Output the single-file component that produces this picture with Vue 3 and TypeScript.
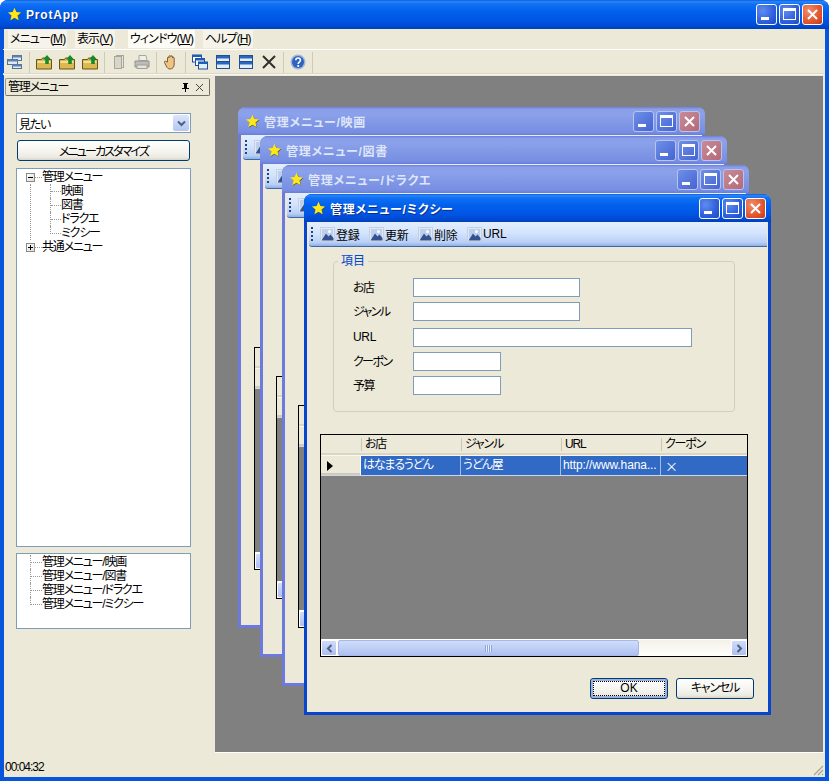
<template>
  <div class="app">
    <header class="titlebar main-title">
      <svg class="star" viewBox="0 0 16 16"><path d="M8.500 1.500l2 4.600 5 .4-3.800 3.300 1.200 4.900-4.400-2.600-4.300 2.600 1.100-4.900L2 6.500l5-.4z" fill="#55502a" /><path d="M8 .8l2 4.600 5 .4-3.800 3.300 1.200 4.900L8 11.400l-4.400 2.600 1.200-4.900L1 5.800l5-.4z" fill="#ffe818" /></svg>
      <span class="title-text app-name">ProtApp</span>
      <div class="win-buttons">
        <button class="wb"><i class="min-glyph"></i></button>
        <button class="wb"><i class="max-glyph"></i></button>
        <button class="wb close"><svg viewBox="0 0 13 13"><path d="M2 2l9 9M11 2l-9 9" stroke="#fff" stroke-width="2" /></svg></button>
      </div>
    </header>

    <div class="client">
      <nav class="menubar">
        <span v-for="m in menus" :key="m.key" class="menu-item" :style="{ width: m.width + 'px' }">
          <span class="menu-label" :class="{ bright: m.key === 'W' }">{{ m.label }}(<u>{{ m.key }}</u>)</span>
        </span>
      </nav>

      <div class="toolbar">
        <template v-for="(t, i) in tools" :key="i">
          <span v-if="t === 'sep'" class="sep"></span>
          <span v-else class="tool">
            <svg v-if="t === 'windows'" viewBox="0 0 16 16"><rect x="5.500" y="1.500" width="9" height="5" fill="#dfe8f6" stroke="#5a7288" /><rect x="5.500" y="1.500" width="9" height="2" fill="#5a82b8" /><rect x=".5" y="5.500" width="10" height="5" fill="#dfe8f6" stroke="#5a7288" /><rect x=".5" y="5.500" width="10" height="2" fill="#5a82b8" /><rect x="5.500" y="10.500" width="9" height="4" fill="#dfe8f6" stroke="#5a7288" /><rect x="5.500" y="10.500" width="9" height="2" fill="#5a82b8" /></svg>
            <svg v-else-if="t === 'folder'" viewBox="0 0 16 16"><path d="M.5 5.500h5l1-1.500h3v1.500h6v9.500H.5z" fill="#dcb850" stroke="#6a5418" /><path d="M1.500 7h13v2h-13z" fill="#f4e090" /><path d="M11 1l4 4.500h-2.200V10H9.200V5.500H7z" fill="#168a2c" /></svg>
            <svg v-else-if="t === 'doc'" viewBox="0 0 16 16"><rect x="5.500" y="1.500" width="7" height="12" fill="#e6e4d8" stroke="#a8a698" /><rect x="3.500" y="2.500" width="7" height="12" fill="#d8d6ca" stroke="#a8a698" /></svg>
            <svg v-else-if="t === 'print'" viewBox="0 0 16 16"><path d="M5 1.500h7l1 5H5z" fill="#eeeeea" stroke="#a8a8a0" /><path d="M1 7h14v6H1z" fill="#bdbdb6" stroke="#92928a" /><rect x="3" y="11" width="10" height="3.500" fill="#e4e4de" stroke="#a0a098" /></svg>
            <svg v-else-if="t === 'hand'" viewBox="0 0 16 16"><path d="M4.500 8V4c0-1.200 1.500-1.200 1.500 0V2.500c0-1.200 1.800-1.200 1.800 0V2.700c0-1.200 1.800-1.200 1.800 0V4c0-1 1.600-1 1.600 0v6c0 3-1.500 5-4 5-2 0-3-1-4-3L1.500 8.500C1 7.500 2.300 6.600 3 7.500z" fill="#ecc488" stroke="#7a5420" stroke-width=".9" /></svg>
            <svg v-else-if="t === 'cascade'" viewBox="0 0 16 16"><rect x=".5" y="1" width="9" height="7" fill="#fff" stroke="#1f4f96" /><rect x=".5" y="1" width="9" height="2" fill="#1f5fb8" /><rect x="3.500" y="4.500" width="9" height="7" fill="#fff" stroke="#1f4f96" /><rect x="3.500" y="4.500" width="9" height="2" fill="#1f5fb8" /><rect x="6.500" y="8" width="9" height="7" fill="#e4eefa" stroke="#1f4f96" /><rect x="6.500" y="8" width="9" height="2" fill="#1f5fb8" /></svg>
            <svg v-else-if="t === 'tile'" viewBox="0 0 16 16"><rect x="1.500" y="1.500" width="13" height="13" fill="#e4eefa" stroke="#1f4f96" /><rect x="2" y="2" width="12" height="2.500" fill="#2a68c0" /><rect x="2" y="8" width="12" height="2.500" fill="#2a68c0" /><path d="M2 7.500h12" stroke="#1f4f96" /></svg>
            <svg v-else-if="t === 'cross'" viewBox="0 0 16 16"><path d="M2 2l12 12M14 2L2 14" stroke="#303030" stroke-width="2" /></svg>
            <svg v-else viewBox="0 0 16 16"><circle cx="8" cy="8" r="7.500" fill="#9db4dc" /><circle cx="8" cy="8" r="6" fill="#2f62c0" /><path d="M5.800 6.200c0-3 4.600-3 4.600 0 0 2-2.200 1.900-2.200 3.700" fill="none" stroke="#fff" stroke-width="1.600" /><rect x="7.300" y="11" width="1.800" height="1.800" fill="#fff" /></svg>
          </span>
        </template>
      </div>

      <div class="workspace">
        <aside class="side">
          <div class="side-head">
            <span class="side-title">管理メニュー</span>
            <svg class="pin" viewBox="0 0 9 9"><path d="M2 0h5v1H6v4h2v1H5v3H4V6H1V5h2V1H2z" fill="#000" /></svg>
            <svg class="side-close" viewBox="0 0 9 9"><path d="M1 1l7 7M8 1L1 8" stroke="#444" stroke-width="1" /></svg>
          </div>
          <div class="select">
            <span class="select-value">見たい</span>
            <span class="select-arrow"><svg viewBox="0 0 9 7"><path d="M1 1.500l3.500 3.500L8 1.500" fill="none" stroke="#4d6185" stroke-width="2" /></svg></span>
          </div>
          <button class="xp-btn custom-btn">メニューカスタマイズ</button>
          <div class="tree big-tree">
            <div class="root-row"><span class="expander"><i class="h"></i></span><span class="dash"></span><span>管理メニュー</span></div>
            <div class="root-children">
              <div class="branch">
                <div v-for="c in treeChildren" :key="c" class="leaf"><span class="stem short"></span><span>{{ c }}</span></div>
              </div>
            </div>
            <div class="root-row"><span class="expander"><i class="h"></i><i class="v"></i></span><span class="dash"></span><span>共通メニュー</span></div>
          </div>
          <div class="tree open-tree">
            <div class="branch">
              <div v-for="w in windows" :key="w.title" class="leaf"><span class="stem long"></span><span>{{ w.title }}</span></div>
            </div>
          </div>
        </aside>

        <main class="mdi">
          <section
            v-for="(w, i) in windows"
            :key="w.title"
            class="child"
            :class="{ inactive: i !== frontIndex }"
            :style="{ left: 23 + i * 22 + 'px', top: 31 + i * 29 + 'px' }"
          >
            <header class="titlebar child-title">
              <svg class="star" viewBox="0 0 16 16"><path d="M8.500 1.500l2 4.600 5 .4-3.800 3.300 1.200 4.900-4.400-2.600-4.300 2.600 1.100-4.900L2 6.500l5-.4z" fill="#55502a" /><path d="M8 .8l2 4.600 5 .4-3.800 3.300 1.200 4.900L8 11.400l-4.400 2.600 1.200-4.900L1 5.800l5-.4z" fill="#ffe818" /></svg>
              <span class="title-text">{{ w.title }}</span>
              <div class="win-buttons">
                <button class="wb"><i class="min-glyph"></i></button>
                <button class="wb"><i class="max-glyph"></i></button>
                <button class="wb close"><svg viewBox="0 0 13 13"><path d="M2 2l9 9M11 2l-9 9" stroke="#fff" stroke-width="2" /></svg></button>
              </div>
            </header>

            <div class="child-tools">
              <span class="grip"></span>
              <span v-for="a in actions" :key="a" class="action">
                <svg viewBox="0 0 15 15"><rect x=".5" y=".5" width="14" height="14" fill="#fff" stroke="#c4cee4" /><rect x="1.500" y="1.500" width="12" height="12" fill="#bcd0ee" /><path d="M1.500 13.500L6 6.500l2.500 3 2-2 3 3.500v2.500z" fill="#34528e" /><circle cx="9.500" cy="4.500" r="1.500" fill="#fff" /></svg>
                <span v-if="i === frontIndex">{{ a }}</span>
              </span>
            </div>

            <fieldset class="group">
              <template v-if="i === frontIndex">
                <legend>項目</legend>
                <div v-for="f in fields" :key="f.label" class="field" :class="{ 'field-url': f.label === 'URL' }">
                  <label>{{ f.label }}</label>
                  <input type="text" :class="f.size" />
                </div>
              </template>
            </fieldset>

            <div class="grid">
              <div class="grid-row grid-head">
                <span class="cell corner"></span>
                <template v-if="i === frontIndex">
                  <span v-for="h in columns" :key="h" class="cell">{{ h }}</span>
                </template>
              </div>
              <div class="grid-row grid-selected">
                <span class="cell row-head"><i class="arrow"></i></span>
                <template v-if="i === frontIndex">
                  <span class="cell">はなまるうどん</span>
                  <span class="cell">うどん屋</span>
                  <span class="cell url-cell">http://www.hana...</span>
                  <span class="cell mark">×</span>
                </template>
              </div>
              <div class="grid-empty"></div>
              <div class="hscroll">
                <span class="sb-btn"><svg viewBox="0 0 9 9"><path d="M6.500 1L3 4.500 6.500 8" fill="none" stroke="#4d6185" stroke-width="2" /></svg></span>
                <span class="sb-thumb"><i></i></span>
                <span class="sb-track"></span>
                <span class="sb-btn"><svg viewBox="0 0 9 9"><path d="M2.500 1L6 4.500 2.500 8" fill="none" stroke="#4d6185" stroke-width="2" /></svg></span>
              </div>
            </div>

            <footer v-if="i === frontIndex" class="child-foot">
              <button class="xp-btn foot-btn default"><span>OK</span></button>
              <button class="xp-btn foot-btn"><span>キャンセル</span></button>
            </footer>
          </section>
        </main>
      </div>

      <footer class="status">
        <span>00:04:32</span>
        <svg class="size-grip" viewBox="0 0 12 12"><path d="M11 2L2 11M11 6l-5 5M11 10l-1 1" stroke="#a8a594" stroke-width="1.200" /></svg>
      </footer>
    </div>
  </div>
</template>

<script setup lang="ts">
interface Field {
  label: string
  size: 'mid' | 'wide' | 'small'
}

const menus = [
  { label: 'メニュー', key: 'M', width: 67 },
  { label: '表示', key: 'V', width: 53 },
  { label: 'ウィンドウ', key: 'W', width: 75 },
  { label: 'ヘルプ', key: 'H', width: 50 }
]

const tools = [
  'windows', 'sep', 'folder', 'folder', 'folder', 'sep', 'doc', 'print', 'sep', 'hand', 'sep',
  'cascade', 'tile', 'tile', 'cross', 'sep', 'help', 'sep'
]

const treeChildren = ['映画', '図書', 'ドラクエ', 'ミクシー']

const windows = [
  { title: '管理メニュー/映画' },
  { title: '管理メニュー/図書' },
  { title: '管理メニュー/ドラクエ' },
  { title: '管理メニュー/ミクシー' }
]

const frontIndex = windows.length - 1

const actions = ['登録', '更新', '削除', 'URL']

const fields: Field[] = [
  { label: 'お店', size: 'mid' },
  { label: 'ジャンル', size: 'mid' },
  { label: 'URL', size: 'wide' },
  { label: 'クーポン', size: 'small' },
  { label: '予算', size: 'small' }
]

const columns = ['お店', 'ジャンル', 'URL', 'クーポン']
</script>

<style>
html,
body {
  margin: 0;
  overflow: hidden;
  background: #fff;
}
</style>

<style scoped>
.app {
  width: 829px;
  height: 781px;
  display: flex;
  flex-direction: column;
  box-sizing: border-box;
  font-family: "Liberation Sans", "Noto Sans CJK JP", sans-serif;
  font-size: 12px;
  letter-spacing: -1.2px;
  font-feature-settings: "palt";
  color: #000;
  border-radius: 8px 8px 0 0;
  overflow: hidden;
  background: #0855dd;
}

.titlebar {
  display: flex;
  align-items: center;
  flex: none;
  color: #fff;
  background: linear-gradient(#0a5ce4 0, #2b86f5 6%, #0f70f4 14%, #0261ec 40%, #0055e5 70%, #0049d2 90%, #003fb8 100%);
}

.main-title {
  height: 29px;
  padding: 0 6px 0 7px;
}

.star {
  width: 15px;
  height: 15px;
  flex: none;
}

.title-text {
  margin-left: 5px;
  font-weight: 700;
  font-size: 12px;
  text-shadow: 1px 1px 0 #0a2f8a;
  white-space: nowrap;
}

.app-name {
  margin-left: 4px;
  font-size: 12px;
  letter-spacing: 0.8px;
}

.win-buttons {
  margin-left: auto;
  display: flex;
  gap: 2px;
}

.wb {
  width: 21px;
  height: 21px;
  padding: 0;
  box-sizing: border-box;
  border: 1px solid #fff;
  border-radius: 3px;
  background: radial-gradient(circle at 30% 30%, #5f8df0, #2f5fdc 60%, #2148c0);
  display: flex;
  position: relative;
}

.wb.close {
  background: radial-gradient(circle at 30% 30%, #ef8d6c, #e2562e 60%, #c03a14);
  align-items: center;
  justify-content: center;
}

.wb.close svg {
  width: 13px;
  height: 13px;
}

.min-glyph {
  width: 8px;
  height: 3px;
  background: #fff;
  margin: 12px 0 0 4px;
}

.max-glyph {
  width: 13px;
  height: 12px;
  box-sizing: border-box;
  border: 1px solid #fff;
  border-top-width: 3px;
  margin: 3px 0 0 3px;
}

.client {
  flex: 1;
  margin: 0 4px 4px;
  display: flex;
  flex-direction: column;
  background: #ece9d8;
  min-height: 0;
}

.menubar {
  height: 20px;
  flex: none;
  display: flex;
  align-items: center;
  padding-left: 4px;
}

.menu-item {
  flex: none;
  height: 18px;
  line-height: 18px;
  white-space: nowrap;
  letter-spacing: -0.9px;
}

.menu-label {
  display: inline-block;
  padding: 0 2px;
  background: #f6f4ea;
}

.menu-label.bright {
  background: #fcfbf6;
}

.toolbar {
  height: 24px;
  flex: none;
  display: flex;
  align-items: center;
  margin-left: -1px;
  border-top: 1px solid #fff;
  border-bottom: 1px solid #f8f7f0;
  box-shadow: inset 0 -1px 0 #dcd8c4;
}

.tool {
  width: 23px;
  height: 16px;
  display: flex;
  justify-content: center;
}

.tool svg {
  width: 16px;
  height: 16px;
}

.sep {
  width: 6px;
  height: 21px;
  box-sizing: border-box;
  border-left: 3px solid transparent;
  background: linear-gradient(#cdcab6, #cdcab6) no-repeat left / 1px 100%;
}

.workspace {
  flex: 1;
  display: flex;
  min-height: 0;
  padding-top: 1px;
}

.side {
  width: 211px;
  flex: none;
  display: flex;
  flex-direction: column;
  padding-left: 12px;
  box-sizing: border-box;
}

.side-head {
  margin: 2px 5px 0 -11px;
  height: 18px;
  box-sizing: border-box;
  border: 1px solid #9a978a;
  border-right-color: #716f64;
  border-bottom-color: #716f64;
  border-radius: 2px;
  display: flex;
  align-items: center;
  padding: 0 5px 3px 2px;
}

.side-title {
  flex: 1;
}

.pin,
.side-close {
  width: 9px;
  height: 9px;
  margin: 3px 0 0 5px;
}

.select {
  margin-top: 17px;
  width: 175px;
  height: 20px;
  box-sizing: border-box;
  border: 1px solid #7f9db9;
  background: #fff;
  display: flex;
  align-items: center;
  padding: 1px 1px 1px 2px;
}

.select-value {
  flex: 1;
}

.select-arrow {
  width: 16px;
  height: 16px;
  border-radius: 2px;
  background: linear-gradient(#dbe5fb, #b4c6f2);
  display: flex;
  align-items: center;
  justify-content: center;
}

.select-arrow svg {
  width: 9px;
  height: 7px;
}

.xp-btn {
  font: inherit;
  letter-spacing: inherit;
  font-feature-settings: inherit;
  color: #000;
  padding: 0;
  box-sizing: border-box;
  border: 1px solid #003c74;
  border-radius: 3px;
  background: linear-gradient(#fff, #f6f5ef 50%, #ecebe3 85%, #d8d4c8);
}

.custom-btn {
  margin: 7px 0 0 1px;
  width: 173px;
  height: 21px;
  letter-spacing: -1.9px;
}

.tree {
  box-sizing: border-box;
  width: 175px;
  border: 1px solid #7f9db9;
  background: #fff;
  padding-top: 1px;
  line-height: 14px;
}

.big-tree {
  margin-top: 7px;
  height: 379px;
}

.open-tree {
  margin-top: 6px;
  height: 76px;
}

.root-row {
  height: 14px;
  display: flex;
  align-items: center;
  padding-left: 9px;
  white-space: nowrap;
}

.expander {
  width: 9px;
  height: 9px;
  box-sizing: border-box;
  border: 1px solid #8a8a8a;
  background: linear-gradient(135deg, #fff, #dcdcd0);
  position: relative;
  flex: none;
}

.expander .h {
  position: absolute;
  left: 1px;
  top: 3px;
  width: 5px;
  height: 1px;
  background: #000;
}

.expander .v {
  position: absolute;
  left: 3px;
  top: 1px;
  width: 1px;
  height: 5px;
  background: #000;
}

.dash {
  width: 7px;
  border-top: 1px dotted #999;
  flex: none;
}

.root-children {
  margin-left: 13px;
  padding-left: 19px;
  border-left: 1px dotted #999;
}

.open-tree .branch {
  margin-left: 13px;
}

.leaf {
  height: 14px;
  display: flex;
  white-space: nowrap;
}

.leaf:not(:last-child) {
  border-left: 1px dotted #999;
}

.leaf:last-child .stem {
  border-left: 1px dotted #999;
}

.stem {
  height: 7px;
  box-sizing: content-box;
  border-bottom: 1px dotted #999;
  flex: none;
}

.stem.short {
  width: 10px;
}

.stem.long {
  width: 11px;
}

.mdi {
  flex: 1;
  position: relative;
  overflow: hidden;
  background: #808080;
  border-right: 2px solid #ece9d8;
  border-bottom: 1px solid #fff;
  min-width: 0;
}

.child {
  position: absolute;
  width: 467px;
  height: 521px;
  box-sizing: border-box;
  padding: 0 3px 3px;
  display: flex;
  flex-direction: column;
  background: #ece9d8;
  border-radius: 8px 8px 0 0;
  box-shadow: inset 0 0 0 3px #0645cc;
}

.child-title {
  height: 28px;
  margin: 0 -3px;
  padding: 0 5px 0 7px;
  border-radius: 8px 8px 0 0;
}

.child-title .title-text {
  margin-left: 4px;
  font-size: 12px;
  letter-spacing: 0.7px;
}

.inactive {
  box-shadow: inset 0 0 0 3px #6c7ade;
}

.inactive .child-title {
  background: linear-gradient(#6d80da 0, #8a9eea 8%, #8ba1ea 25%, #8097e6 60%, #788ee2 90%, #6a7cd6 100%);
}

.inactive .title-text {
  color: #dfe6fa;
  text-shadow: none;
}

.inactive .wb {
  border-color: #b8c4ef;
  background: linear-gradient(135deg, #6f8fe6, #4464d4);
}

.inactive .wb.close {
  background: linear-gradient(135deg, #c98a98, #b46a78);
}

.inactive .row-head .arrow {
  display: none;
}

.child-tools {
  height: 25px;
  flex: none;
  box-sizing: border-box;
  margin: 0 1px 0 2px;
  display: flex;
  align-items: center;
  padding-left: 2px;
  border-radius: 0 0 0 3px;
  border-bottom: 1px solid #3e67a8;
  background: linear-gradient(#e3effe, #d4e4fc 45%, #b8d0f6 85%, #8fb0e4);
}

.grip {
  width: 2px;
  height: 15px;
  margin-right: 7px;
  background: repeating-linear-gradient(#27417a 0 2px, transparent 2px 4px);
}

.action {
  display: flex;
  align-items: center;
  gap: 1px;
  margin-right: 8px;
  width: 41px;
  white-space: nowrap;
  letter-spacing: -0.2px;
}

.action svg {
  width: 15px;
  height: 15px;
  flex: none;
}

.group {
  margin: 7px 0 0 26px;
  width: 402px;
  height: 158px;
  box-sizing: border-box;
  border: 1px solid #d0d0bf;
  border-radius: 4px;
  padding: 10px 0 0 19px;
  flex: none;
}

.group legend {
  margin-left: -15px;
  padding: 0 3px;
  color: #0046d5;
  line-height: 14px;
  letter-spacing: 0;
}

.field {
  display: flex;
  align-items: center;
  height: 19px;
  margin-bottom: 5px;
}

.field-url {
  margin-top: 7px;
}

.field label {
  width: 60px;
  flex: none;
  letter-spacing: -1.6px;
  margin-top: -2px;
}

.field-url label {
  letter-spacing: -0.3px;
}

.field input {
  height: 19px;
  box-sizing: border-box;
  border: 1px solid #7f9db9;
  background: #fff;
  padding: 0;
  margin: 0;
  outline: none;
}

.field input.mid {
  width: 167px;
}

.field input.wide {
  width: 279px;
}

.field input.small {
  width: 88px;
}

.grid {
  margin: 22px 0 0 13px;
  width: 428px;
  height: 223px;
  flex: none;
  box-sizing: border-box;
  border: 1px solid #000;
  background: #808080;
  display: flex;
  flex-direction: column;
}

.grid-row {
  display: grid;
  grid-template-columns: 40px 100px 100px 100px 86px;
  flex: none;
}

.cell {
  white-space: nowrap;
  padding: 0 2px;
  box-sizing: border-box;
}

.grid-head {
  height: 21px;
  background: #ece9d8;
  border-bottom: 1px solid #f8f8f2;
  box-sizing: border-box;
  line-height: 18px;
  box-shadow: inset 0 -2px 0 #dad6c3;
}

.grid-head .cell {
  padding-left: 4px;
  background: linear-gradient(#cbc7b2, #cbc7b2) no-repeat left 0 top 3px / 1px 13px;
}

.grid-head .corner {
  background: none;
}

.grid-selected {
  height: 20px;
  background: #316ac5;
  color: #fff;
  line-height: 19px;
  border-bottom: 1px solid #c9d6ec;
  box-sizing: border-box;
}

.inactive .grid-selected {
  background: #fff;
}

.grid-selected .cell {
  border-right: 1px solid #a7bce0;
}

.grid-selected .cell:last-child {
  border-right: 0;
}

.url-cell {
  letter-spacing: -0.1px;
}

.mark {
  padding-left: 4px;
  font-family: "Noto Sans CJK JP", sans-serif;
  font-size: 13px;
  letter-spacing: 0;
}

.grid-selected .row-head {
  background: #ece9d8;
  color: #000;
  display: flex;
  align-items: center;
  padding-left: 6px;
  box-shadow: inset 0 -2px 0 #cfcbb8;
  border-right: 1px solid #fff;
}

.arrow {
  width: 0;
  height: 0;
  border-left: 6px solid #000;
  border-top: 5px solid transparent;
  border-bottom: 5px solid transparent;
}

.grid-empty {
  flex: 1;
}

.hscroll {
  height: 17px;
  flex: none;
  box-sizing: border-box;
  border-top: 1px solid #fff;
  display: flex;
  background: #fbfbf8;
}

.sb-btn {
  width: 16px;
  flex: none;
  border-radius: 2px;
  background: linear-gradient(#cfdcf8, #aebff0);
  border: 1px solid #fff;
  box-sizing: border-box;
  display: flex;
  align-items: center;
  justify-content: center;
}

.sb-btn svg {
  width: 9px;
  height: 9px;
}

.sb-thumb {
  width: 301px;
  margin-left: 1px;
  flex: none;
  box-sizing: border-box;
  border: 1px solid #a8b8e8;
  border-radius: 2px;
  background: linear-gradient(#cfdcf9, #bed0f6 50%, #aebff0);
  display: flex;
  align-items: center;
  justify-content: center;
}

.sb-thumb i {
  width: 7px;
  height: 7px;
  background: repeating-linear-gradient(90deg, #8ea4e0 0 1px, #e8eefc 1px 2px);
}

.sb-track {
  flex: 1;
  background: linear-gradient(#f3f1e8, #fefefc);
}

.child-foot {
  display: flex;
  justify-content: flex-end;
  gap: 8px;
  margin: 21px 14px 0 0;
}

.foot-btn {
  width: 78px;
  height: 21px;
}

.foot-btn span {
  display: block;
  line-height: 17px;
}

.foot-btn.default {
  box-shadow: inset 0 0 0 2px #9db0e0;
  letter-spacing: 0;
}

.foot-btn.default span {
  margin: 2px;
  border: 1px dotted #000;
  line-height: 13px;
}

.status {
  height: 24px;
  flex: none;
  display: flex;
  align-items: flex-end;
  padding: 0 1px 2px 1px;
  justify-content: space-between;
  box-sizing: border-box;
  line-height: 16px;
  letter-spacing: -1px;
}

.size-grip {
  width: 12px;
  height: 12px;
  margin-bottom: -1px;
}
</style>
